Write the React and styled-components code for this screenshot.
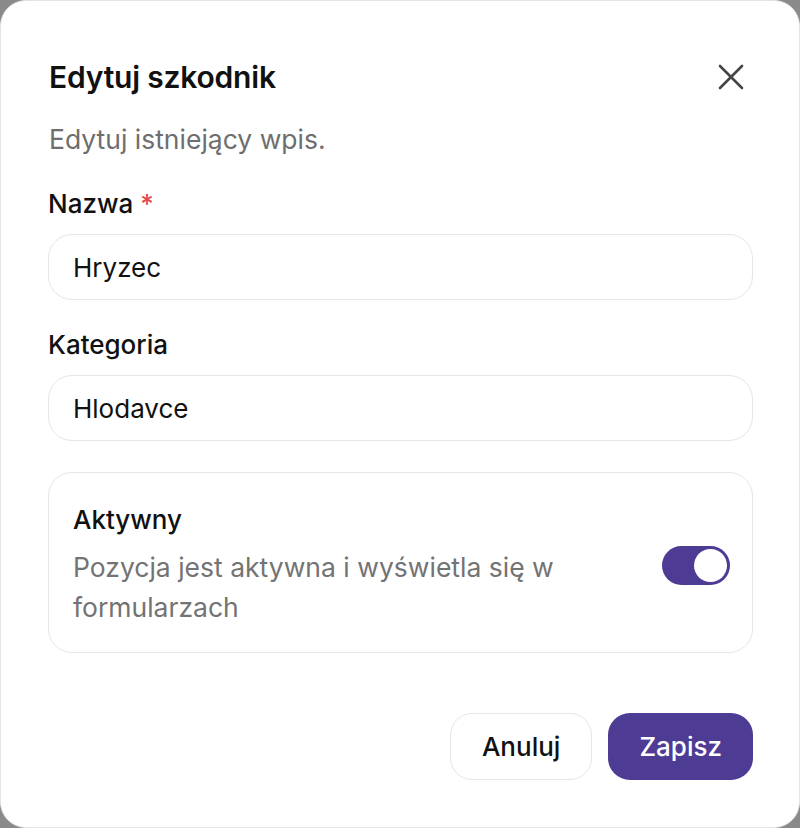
import React, { useState } from 'react';
import styled, { createGlobalStyle } from 'styled-components';

const GlobalStyle = createGlobalStyle`
  * { box-sizing: border-box; }
  html, body {
    margin: 0;
    padding: 0;
    background: #8a8a8a;
  }
  body {
    font-family: Inter, "Noto Sans", "Liberation Sans", sans-serif;
    color: #111;
  }
`;

const Dialog = styled.div`
  width: 800px;
  height: 828px;
  background: #fff;
  border: 1px solid #e4e4e4;
  border-radius: 26px;
  padding: 56px 46px 47px 47px;
  display: flex;
  flex-direction: column;
`;

const Header = styled.div`
  display: flex;
  align-items: center;
  justify-content: space-between;
`;

const Title = styled.h2`
  margin: 0 0 0 1px;
  font-size: 30px;
  line-height: 40px;
  font-weight: 600;
  letter-spacing: -0.2px;
  color: #111;
`;

const CloseButton = styled.button`
  width: 40px;
  height: 40px;
  margin-right: 2px;
  border: none;
  background: transparent;
  display: flex;
  align-items: center;
  justify-content: center;
  padding: 0;
  cursor: pointer;
  color: #454545;
`;

const Subtitle = styled.p`
  margin: 26px 0 0 1px;
  font-size: 26.5px;
  line-height: 32px;
  color: #6e6e6e;
`;

const Field = styled.div`
  display: flex;
  flex-direction: column;
  gap: 14px;
  margin-top: ${p => p.$top}px;
`;

const Label = styled.label`
  font-size: 26px;
  line-height: 32px;
  font-weight: 500;
  color: #111;
`;

const Required = styled.span`
  color: #e5484d;
  margin-left: 7px;
`;

const Input = styled.input`
  height: 66px;
  width: 100%;
  border: 1.5px solid #e6e6e6;
  border-radius: 24px;
  padding: 0 24px;
  font-family: inherit;
  font-size: 26px;
  color: #111;
  background: #fff;
  outline: none;
`;

const SwitchCard = styled.div`
  margin-top: 31px;
  border: 1.5px solid #e6e6e6;
  border-radius: 24px;
  padding: 31px 22px 25px 24px;
  display: flex;
  align-items: center;
  gap: 24px;
`;

const SwitchText = styled.div`
  flex: 1;
  display: flex;
  flex-direction: column;
`;

const SwitchTitle = styled.div`
  font-size: 26px;
  line-height: 32px;
  font-weight: 500;
  color: #111;
  margin-bottom: 11px;
`;

const SwitchDesc = styled.div`
  font-size: 26.5px;
  line-height: 40px;
  color: #737373;
`;

const Toggle = styled.button`
  width: 68px;
  height: 39px;
  border-radius: 20px;
  border: none;
  padding: 3px;
  background: ${p => (p.$on ? '#4e3b93' : '#d9d9d9')};
  display: flex;
  justify-content: ${p => (p.$on ? 'flex-end' : 'flex-start')};
  cursor: pointer;
  flex-shrink: 0;
`;

const Knob = styled.span`
  width: 33px;
  height: 33px;
  border-radius: 50%;
  background: #fff;
`;

const Footer = styled.div`
  margin-top: auto;
  display: flex;
  justify-content: flex-end;
  gap: 16px;
`;

const Button = styled.button`
  height: 67px;
  padding: 0 31px;
  border-radius: 22px;
  font-family: inherit;
  font-size: 26px;
  font-weight: 500;
  cursor: pointer;
  border: ${p => (p.$primary ? 'none' : '1.5px solid #e6e6e6')};
  background: ${p => (p.$primary ? '#4e3b93' : '#fff')};
  color: ${p => (p.$primary ? '#fff' : '#111')};
`;

export default function App() {
  const [active, setActive] = useState(true);

  return (
    <>
      <GlobalStyle />
      <Dialog>
        <Header>
          <Title>Edytuj szkodnik</Title>
          <CloseButton aria-label="Zamknij">
            <svg width="26" height="26" viewBox="0 0 26 26" fill="none">
              <path
                d="M2 2L24 24M24 2L2 24"
                stroke="currentColor"
                strokeWidth="2.6"
                strokeLinecap="round"
              />
            </svg>
          </CloseButton>
        </Header>
        <Subtitle>Edytuj istniejący wpis.</Subtitle>

        <Field $top={33}>
          <Label>
            Nazwa<Required>*</Required>
          </Label>
          <Input defaultValue="Hryzec" />
        </Field>

        <Field $top={29}>
          <Label>Kategoria</Label>
          <Input defaultValue="Hlodavce" />
        </Field>

        <SwitchCard>
          <SwitchText>
            <SwitchTitle>Aktywny</SwitchTitle>
            <SwitchDesc>
              Pozycja jest aktywna i wyświetla się w formularzach
            </SwitchDesc>
          </SwitchText>
          <Toggle $on={active} onClick={() => setActive(!active)}>
            <Knob />
          </Toggle>
        </SwitchCard>

        <Footer>
          <Button>Anuluj</Button>
          <Button $primary>Zapisz</Button>
        </Footer>
      </Dialog>
    </>
  );
}
